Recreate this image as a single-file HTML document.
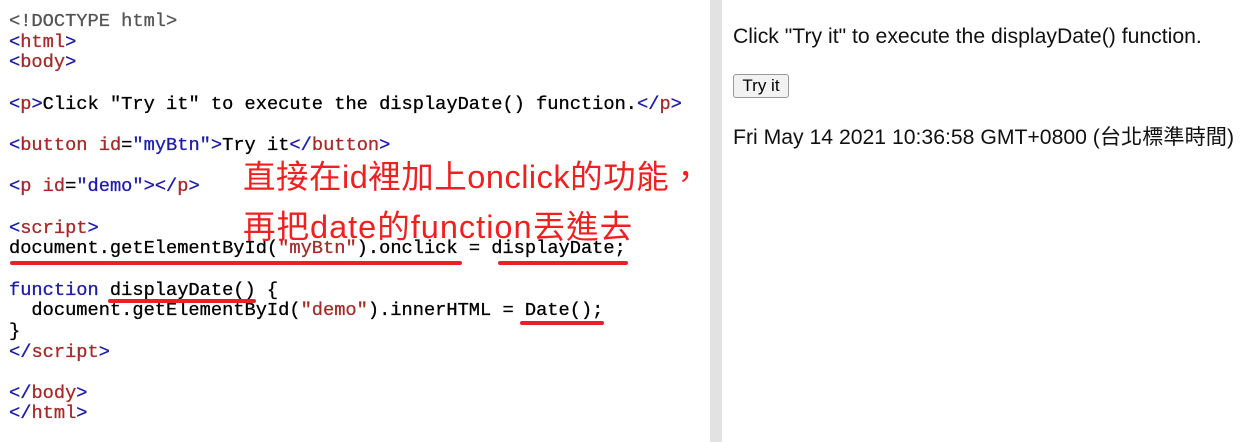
<!DOCTYPE html>
<html><head><meta charset="utf-8"><style>
body{margin:0;width:1258px;height:442px;background:#fff;position:relative;overflow:hidden}
#code{position:absolute;left:9px;top:11px;font-family:"Liberation Mono",monospace;font-size:18.7px;line-height:20.65px;white-space:pre;color:#000;-webkit-text-stroke:0.3px #000}
.t{color:#1c1ca8;-webkit-text-stroke-color:#1c1ca8}.n,.a,.s{color:#a52a2a;-webkit-text-stroke-color:#a52a2a}.v,.k{color:#1c1ca8;-webkit-text-stroke-color:#1c1ca8}.g{color:#555;-webkit-text-stroke-color:#555}
#bar{position:absolute;left:710px;top:0;width:12px;height:442px;background:#e2e2e2}
#right{position:absolute;left:733px;top:0;font-family:"Liberation Sans","Noto Sans CJK TC",sans-serif;font-size:21.2px;color:#111}
.red{position:absolute;font-family:"Liberation Sans","Noto Sans CJK TC",sans-serif;font-size:32.5px;color:#f02020;white-space:nowrap}
.u{position:absolute;height:3.5px;background:#e8202a;border-radius:2px}
button{position:absolute;left:733px;top:74px;width:56px;height:24px;font-family:"Liberation Sans",sans-serif;font-size:17px;border:1px solid #999;border-radius:3px;background:#f2f2f2;padding:0}
</style></head><body>
<div id="code"><span class="g">&lt;!DOCTYPE html&gt;</span>
<span class="t">&lt;</span><span class="n">html</span><span class="t">&gt;</span>
<span class="t">&lt;</span><span class="n">body</span><span class="t">&gt;</span>

<span class="t">&lt;</span><span class="n">p</span><span class="t">&gt;</span>Click "Try it" to execute the displayDate() function.<span class="t">&lt;/</span><span class="n">p</span><span class="t">&gt;</span>

<span class="t">&lt;</span><span class="n">button</span> <span class="a">id</span>=<span class="v">"myBtn"</span><span class="t">&gt;</span>Try it<span class="t">&lt;/</span><span class="n">button</span><span class="t">&gt;</span>

<span class="t">&lt;</span><span class="n">p</span> <span class="a">id</span>=<span class="v">"demo"</span><span class="t">&gt;&lt;/</span><span class="n">p</span><span class="t">&gt;</span>

<span class="t">&lt;</span><span class="n">script</span><span class="t">&gt;</span>
document.getElementById(<span class="s">"myBtn"</span>).onclick = displayDate;

<span class="k">function</span> displayDate() {
  document.getElementById(<span class="s">"demo"</span>).innerHTML = Date();
}
<span class="t">&lt;/</span><span class="n">script</span><span class="t">&gt;</span>

<span class="t">&lt;/</span><span class="n">body</span><span class="t">&gt;</span>
<span class="t">&lt;/</span><span class="n">html</span><span class="t">&gt;</span></div>
<div class="red" style="left:243px;top:151px;letter-spacing:0.5px">直接在id裡加上onclick的功能，</div>
<div class="red" style="left:243px;top:201px;letter-spacing:1px">再把date的function丟進去</div>
<div class="u" style="left:10px;top:261px;width:452px"></div>
<div class="u" style="left:498px;top:261px;width:130px"></div>
<div class="u" style="left:108px;top:299px;width:148px"></div>
<div class="u" style="left:520px;top:321px;width:84px"></div>
<div id="bar"></div>
<div id="right"><div style="position:absolute;top:25px;white-space:nowrap">Click "Try it" to execute the displayDate() function.</div>
<div style="position:absolute;top:120px;white-space:nowrap">Fri May 14 2021 10:36:58 GMT+0800 (台北標準時間)</div></div>
<button>Try it</button>
</body></html>
